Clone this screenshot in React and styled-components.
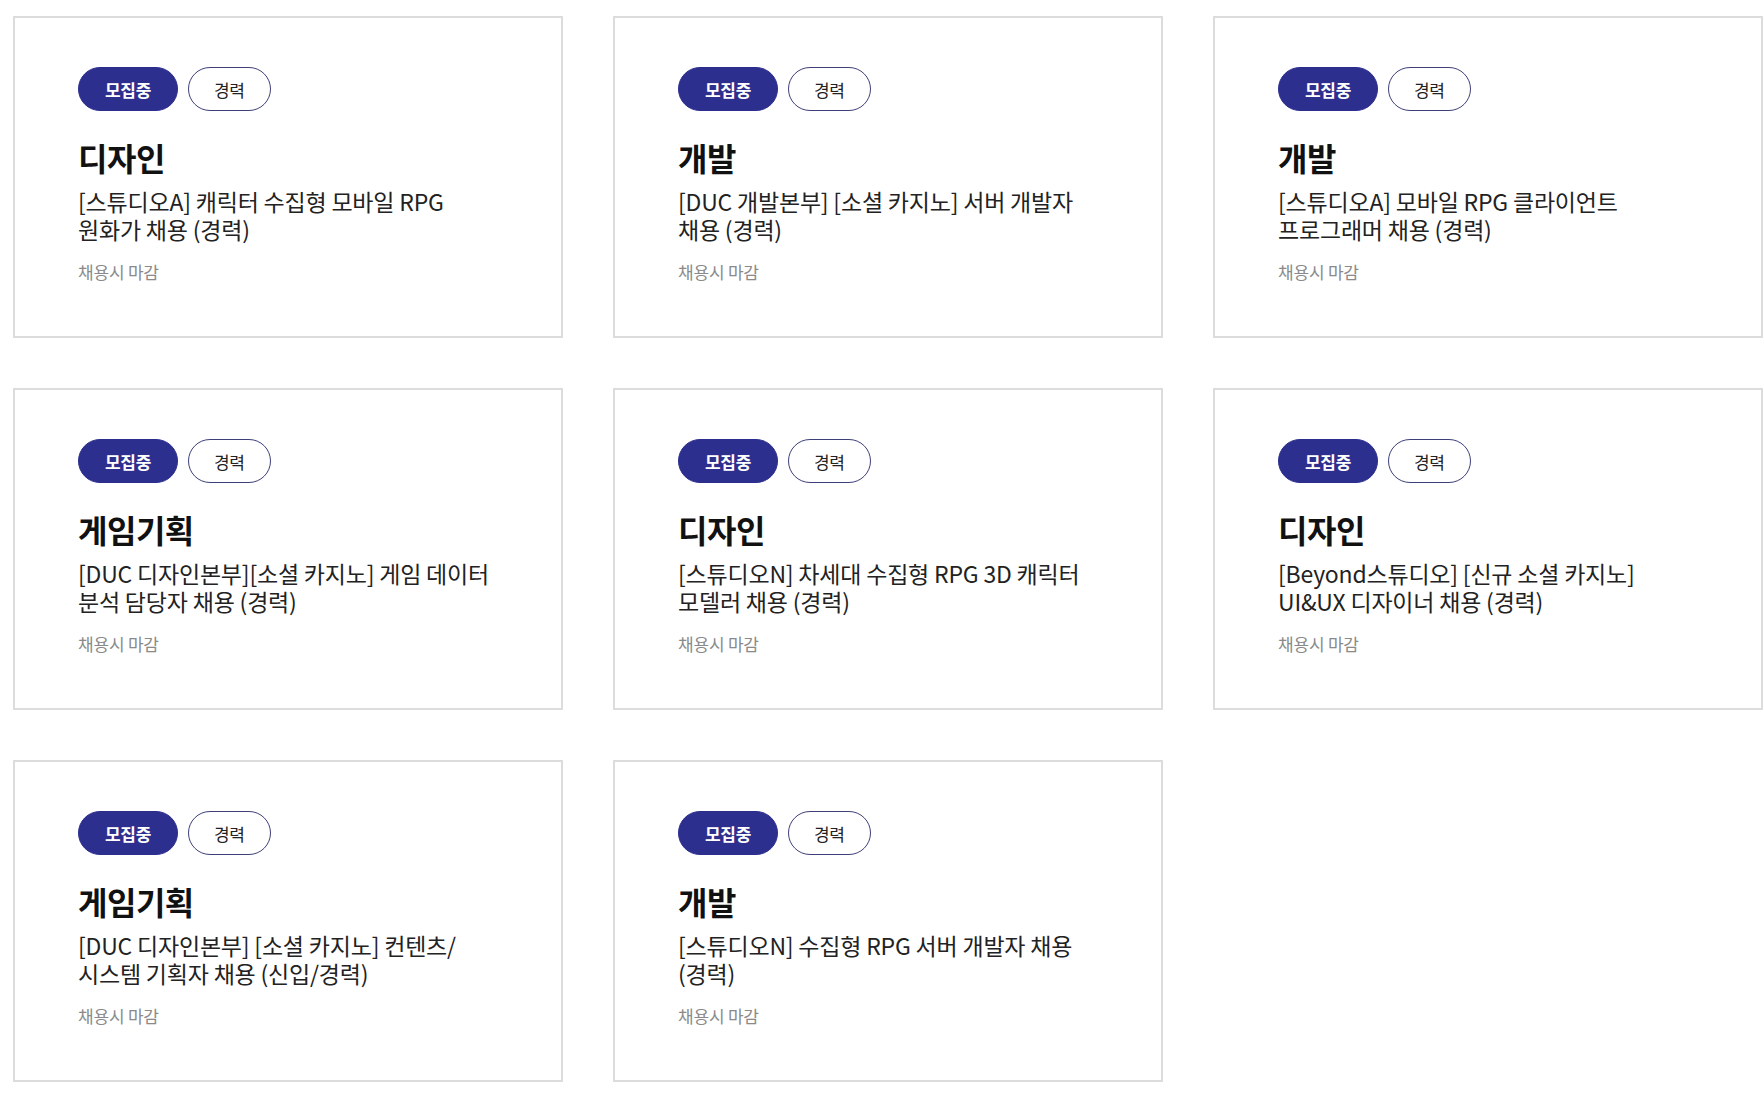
import React from "react";
import styled, { createGlobalStyle } from "styled-components";

const GlobalStyle = createGlobalStyle`
  html, body {
    margin: 0;
    padding: 0;
    background: #fff;
  }
  body {
    font-family: "Noto Sans CJK KR", "Noto Sans", sans-serif;
    color: #111;
  }
`;

const Page = styled.div`
  padding: 16px 0 20px 13px;
`;

const Grid = styled.ul`
  display: grid;
  grid-template-columns: repeat(3, 550px);
  column-gap: 50px;
  row-gap: 50px;
  margin: 0;
  padding: 0;
  list-style: none;
`;

const Card = styled.li`
  box-sizing: border-box;
  height: 322px;
  padding: 49px 60px 0 63px;
  border: 2px solid #dcdcdc;
  background: #fff;
`;

const Badges = styled.div`
  display: flex;
  gap: 10px;
`;

const Badge = styled.span`
  box-sizing: border-box;
  display: inline-flex;
  align-items: center;
  justify-content: center;
  height: 44px;
  padding: 0 ${(p) => (p.$filled ? "26px" : "25px")};
  border-radius: 22px;
  border: 1px solid ${(p) => (p.$filled ? "#2d2f8f" : "#3d3f78")};
  background: ${(p) => (p.$filled ? "#2d2f8f" : "#fff")};
  color: ${(p) => (p.$filled ? "#fff" : "#222")};
  font-size: 17px;
  font-weight: ${(p) => (p.$filled ? 700 : 400)};
  letter-spacing: -0.3px;
`;

const Title = styled.h3`
  margin: 26px 0 0;
  font-size: 32px;
  line-height: 40px;
  font-weight: 700;
  color: #111;
  letter-spacing: -0.5px;
`;

const Desc = styled.p`
  margin: 10px 0 0;
  font-size: 23px;
  line-height: 28px;
  font-weight: 400;
  color: #222;
  white-space: pre-line;
  letter-spacing: -0.2px;
`;

const Meta = styled.p`
  margin: 18px 0 0;
  font-size: 17px;
  line-height: 22px;
  color: #8a8a8a;
  letter-spacing: -0.2px;
`;

const jobs = [
  { id: 1, part: "디자인", title: "[스튜디오A] 캐릭터 수집형 모바일 RPG\n원화가 채용 (경력)" },
  { id: 2, part: "개발", title: "[DUC 개발본부] [소셜 카지노] 서버 개발자\n채용 (경력)" },
  { id: 3, part: "개발", title: "[스튜디오A] 모바일 RPG 클라이언트\n프로그래머 채용 (경력)" },
  { id: 4, part: "게임기획", title: "[DUC 디자인본부][소셜 카지노] 게임 데이터\n분석 담당자 채용 (경력)" },
  { id: 5, part: "디자인", title: "[스튜디오N] 차세대 수집형 RPG 3D 캐릭터\n모델러 채용 (경력)" },
  { id: 6, part: "디자인", title: "[Beyond스튜디오] [신규 소셜 카지노]\nUI&UX 디자이너 채용 (경력)" },
  { id: 7, part: "게임기획", title: "[DUC 디자인본부] [소셜 카지노] 컨텐츠/\n시스템 기획자 채용 (신입/경력)" },
  { id: 8, part: "개발", title: "[스튜디오N] 수집형 RPG 서버 개발자 채용\n(경력)" }
];

const App = () => (
  <Page>
    <GlobalStyle />
    <Grid>
      {jobs.map((job) => (
        <Card key={job.id}>
          <Badges>
            <Badge $filled>모집중</Badge>
            <Badge>경력</Badge>
          </Badges>
          <Title>{job.part}</Title>
          <Desc>{job.title}</Desc>
          <Meta>채용시 마감</Meta>
        </Card>
      ))}
    </Grid>
  </Page>
);

export default App;
